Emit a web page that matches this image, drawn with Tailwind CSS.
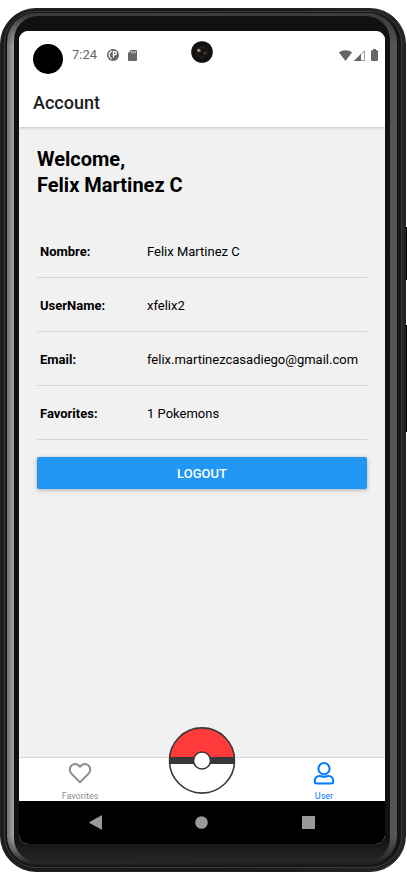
<!DOCTYPE html>
<html lang="en">
<head>
<meta charset="utf-8">
<meta name="viewport" content="width=device-width, initial-scale=1">
<title>Account</title>
<script src="https://cdn.jsdelivr.net/npm/@tailwindcss/browser@4"></script>
</head>
<body class="bg-white font-['Roboto',sans-serif] text-black">
<!-- Device frame: outer shell, metal rail, black bezel, screen -->
<div class="relative flex min-h-screen flex-col pt-2 pr-px">
  <div class="absolute top-[227px] right-0 h-[53px] w-1 bg-black"></div>
  <div class="absolute top-[325px] right-0 h-[107px] w-1 bg-black"></div>
  <div class="relative flex grow flex-col rounded-[36px] border border-[#222222] bg-linear-to-r from-[#1c1c1c] via-[#161616] to-[#242424] pt-[2px] pr-[3px] pb-[3px] pl-[3px]">
    <div class="flex grow flex-col rounded-[32px] border border-[#3c3c3c] bg-[#161616] pt-px pr-1 pb-[2px] pl-[2px]">
      <div class="flex grow flex-col rounded-[29px] bg-[linear-gradient(to_bottom,#3c3c3c_0px,#3c3c3c_4px,transparent_32px,transparent_calc(100%-28px),#1e1e1e_100%),linear-gradient(to_right,#707070,#a0a0a0_6px,#5a5a5a_50%,#555555)] pt-[3px] pr-[7px] pb-[3px] pl-[7px]">
        <div class="flex grow flex-col rounded-[24px] bg-linear-to-b from-[#111111] from-97% to-[#262626] px-[5px] pt-[15px] pb-[18px]">
          <div class="relative flex grow flex-col overflow-hidden rounded-[9px] bg-[#f1f1f1]">

            <header class="bg-white shadow-[0_1px_2px_rgba(0,0,0,0.18)]">
              <div class="flex h-12 items-center pr-[7px] pl-[14px] text-[#666666]">
                <div class="mt-2 size-[30px] rounded-full bg-black"></div>
                <time class="ml-[9px] text-[13px] leading-4">7:24</time>
                <svg class="ml-[10px] size-3" viewBox="0 0 12 12" aria-hidden="true">
                  <circle cx="6" cy="6" r="6" fill="#666666"/>
                  <path d="M5 1.5C3 1.8 1.5 3.6 1.6 6C1.7 8.2 3 9.9 5 10.4V9.2C3.5 8.7 2.8 7.4 2.8 6C2.8 4.6 3.5 3.3 5 2.8Z" fill="white"/>
                  <path d="M5.8 2H8.2C9.6 2.2 10.2 3.4 10 4.6C9.8 5.8 9 6.4 7.8 6.5H7V8.6H5.8Z" fill="white"/>
                  <path d="M7 3.2H8.4V4.9H7Z" fill="#666666"/>
                </svg>
                <svg class="ml-[9px] h-[11px] w-[9px]" viewBox="0 0 9 11" aria-hidden="true">
                  <path d="M3 0H8Q9 0 9 1V10Q9 11 8 11H1Q0 11 0 10V3Z" fill="#666666"/>
                  <path d="M3.2 1.2V3.3M5.2 1.2V3.3M7.2 1.2V3.3" stroke="white" stroke-width=".8"/>
                </svg>
                <svg class="ml-auto h-[11px] w-[13px]" viewBox="0 0 13 11" aria-hidden="true">
                  <path d="M6.5 11L0 2.6C3.5-.6 9.5-.6 13 2.6Z" fill="#666666"/>
                </svg>
                <svg class="ml-[2px] size-[11px]" viewBox="0 0 11 11" aria-hidden="true">
                  <path d="M.8 10.6L10.6.8V10.6Z" fill="white" stroke="#777777" stroke-width=".8"/>
                  <path d="M0 11L7 4V11Z" fill="#666666"/>
                </svg>
                <svg class="ml-[6px] h-3 w-[7px]" viewBox="0 0 7 12" aria-hidden="true">
                  <path d="M2 0H5V1.2H6Q7 1.2 7 2.2V11Q7 12 6 12H1Q0 12 0 11V2.2Q0 1.2 1 1.2H2Z" fill="#666666"/>
                </svg>
              </div>
              <h1 class="flex h-12 items-center px-[14px] text-lg leading-6 font-medium text-[#1c1c1e]">Account</h1>
            </header>

            <!-- Front camera -->
            <svg class="absolute top-[10px] left-1/2 size-[22px] -translate-x-1/2" viewBox="0 0 22 22" aria-hidden="true">
              <circle cx="11" cy="11" r="10.8" fill="#111111"/>
              <circle cx="11" cy="11" r="6.5" fill="#1f1c1a"/>
              <circle cx="11.5" cy="11.5" r="4" fill="#171413"/>
              <circle cx="8" cy="9.5" r="2" fill="#5a5049"/>
              <circle cx="7.6" cy="9.3" r=".9" fill="#e8e0d8"/>
              <circle cx="14" cy="12" r="1.3" fill="#5b3d20"/>
            </svg>

            <main class="flex grow flex-col px-[18px] pt-[19px]">
              <h2 class="text-xl leading-[26px] font-bold">Welcome,<br>Felix Martinez C</h2>
              <dl class="mt-[26px] text-[13px] leading-4">
                <div class="flex h-[54px] items-center border-b border-[#d3d3d3] px-[3px] pt-[3px]"><dt class="w-[107px] shrink-0 font-bold">Nombre:</dt><dd>Felix Martinez C</dd></div>
                <div class="flex h-[54px] items-center border-b border-[#d3d3d3] px-[3px] pt-[3px]"><dt class="w-[107px] shrink-0 font-bold">UserName:</dt><dd>xfelix2</dd></div>
                <div class="flex h-[54px] items-center border-b border-[#d3d3d3] px-[3px] pt-[3px]"><dt class="w-[107px] shrink-0 font-bold">Email:</dt><dd>felix.martinezcasadiego@gmail.com</dd></div>
                <div class="flex h-[54px] items-center border-b border-[#d3d3d3] px-[3px] pt-[3px]"><dt class="w-[107px] shrink-0 font-bold">Favorites:</dt><dd>1 Pokemons</dd></div>
              </dl>
              <button type="button" class="mt-[17px] h-8 rounded-xs bg-[#2196f3] pt-[2px] text-[13px] leading-4 font-medium text-white shadow-[0_1px_4px_rgba(0,0,0,0.3)]">LOGOUT</button>
            </main>

            <nav class="grid h-11 grid-cols-3 border-t border-[#d8d8d8] bg-white text-[9px] leading-3" aria-label="Tabs">
              <a href="#favorites" class="flex flex-col items-center pt-[3px] text-[#8e8e8f]">
                <svg class="size-6" viewBox="0 0 24 24" fill="none" stroke="currentColor" stroke-width="2" stroke-linejoin="round" aria-hidden="true">
                  <path d="M12 21.3L3.4 12.6C1.3 10.4 1.4 6.4 3.4 4.5C5.7 2.3 8.9 2.5 11 4.7L12 5.8L13 4.7C15.1 2.5 18.3 2.3 20.6 4.5C22.6 6.4 22.7 10.4 20.6 12.6Z"/>
                </svg>
                <span class="mt-[5px]">Favorites</span>
              </a>
              <a href="#pokedex" aria-label="Pokedex" class="relative block">
                <svg class="absolute -top-[31px] left-1/2 h-[67px] w-[67px] -translate-x-1/2" viewBox="0 0 67 67" aria-hidden="true">
                  <circle cx="33.5" cy="33.5" r="32.6" fill="white"/>
                  <path d="M1.04 30.5A32.6 32.6 0 0 1 65.96 30.5Z" fill="#ff3a3a"/>
                  <path d="M1 30H66V37H1Z" fill="#383838"/>
                  <circle cx="33.5" cy="33.5" r="32.6" fill="none" stroke="#383838" stroke-width="1.6"/>
                  <circle cx="33.5" cy="33.5" r="8.5" fill="white" stroke="#383838" stroke-width="1.6"/>
                </svg>
              </a>
              <a href="#user" aria-current="page" class="flex flex-col items-center pt-[3px] text-[#007aff]">
                <svg class="size-6" viewBox="0 0 24 24" fill="none" stroke="currentColor" stroke-width="2" stroke-linejoin="round" aria-hidden="true">
                  <circle cx="12" cy="7.7" r="5.6"/>
                  <path d="M7.4 15C4.5 15 2.8 17.2 2.8 19.9V20.7Q2.8 22.4 4.5 22.4H19.5Q21.2 22.4 21.2 20.7V19.9C21.2 17.2 19.5 15 16.6 15C15.4 15 14.2 15.8 12 15.8C9.8 15.8 8.6 15 7.4 15Z"/>
                </svg>
                <span class="mt-[5px]">User</span>
              </a>
            </nav>

            <div class="flex h-[43px] items-center justify-around bg-black px-[23px] text-[#999999]">
              <button type="button" aria-label="Back"><svg class="h-[15px] w-[13px]" viewBox="0 0 13 15" fill="currentColor"><path d="M12.2.4Q13 0 13 1V14Q13 15 12.2 14.6L.5 8Q0 7.5 .5 7Z"/></svg></button>
              <button type="button" aria-label="Home"><svg class="size-[13px]" viewBox="0 0 13 13" fill="currentColor"><circle cx="6.5" cy="6.5" r="6.3"/></svg></button>
              <button type="button" aria-label="Overview"><svg class="size-[13px]" viewBox="0 0 13 13" fill="currentColor"><rect width="13" height="13" rx=".5"/></svg></button>
            </div>
          </div>
        </div>
      </div>
    </div>
  </div>
</div>
</body>
</html>
